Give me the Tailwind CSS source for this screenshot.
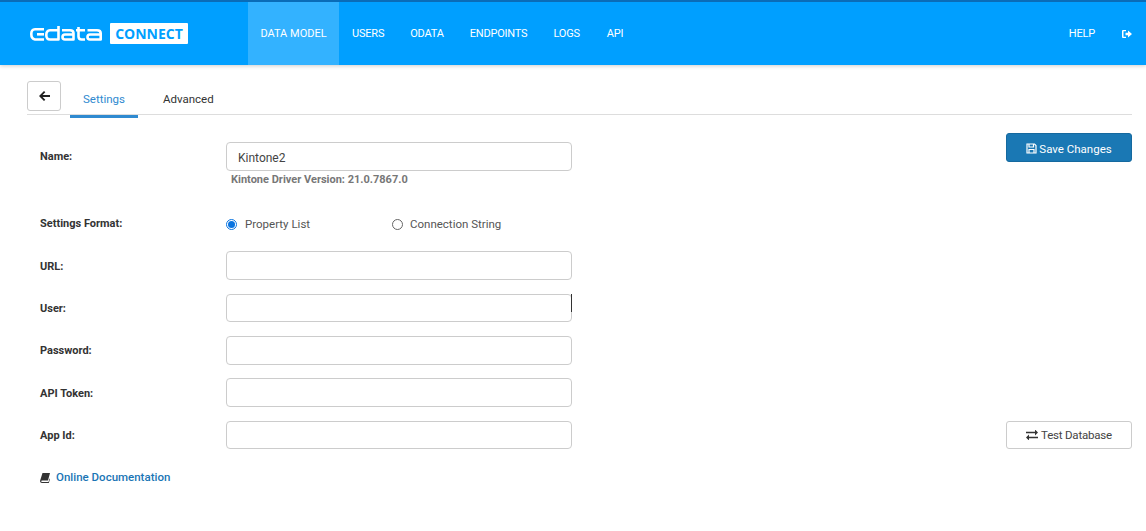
<!DOCTYPE html>
<html lang="en">
<head>
  <meta charset="UTF-8">
  <title>Kintone2 - CData Connect</title>
  <script src="https://cdn.jsdelivr.net/npm/@tailwindcss/browser@4"></script>
</head>
<body class="bg-white font-['Roboto',sans-serif] text-[11.5px] text-[#333]">
  <!-- top bar -->
  <nav class="h-[65px] bg-[#009fff] border-t-2 border-[#0a6cb8] flex items-stretch shadow-[0_1px_4px_rgba(0,0,0,0.2)] text-white text-[11px] tracking-[-0.2px]">
    <div class="w-[248px] pl-[30px] flex items-center gap-2">
      <svg width="72" height="15" viewBox="0 0 72 15" fill="none" stroke="white" stroke-width="2.600" stroke-linejoin="round">
        <path d="M14 3.300H5Q1.300 3.300 1.300 8T5 13.500H14"/>
        <path d="M14 8.300H7"/>
        <path d="M28.500 0V13.500H20Q16.300 13.500 16.300 9T20 4.300H28"/>
        <path d="M32 4.300H40Q43.500 4.300 43.500 7.300V13.500H35Q32.500 13.500 32.500 11T35 8.500H43"/>
        <path d="M48.500 1V10.500Q48.500 13.500 51.500 13.500H55M46 4.300H55"/>
        <path d="M57.500 4.300H67Q70.700 4.300 70.700 7.300V13.500H60Q57.500 13.500 57.500 11T60 8.500H70"/>
      </svg>
      <span class="bg-white text-[#009fff] font-['Open_Sans',sans-serif] font-bold text-[14px] tracking-normal leading-[21px] w-[78px] text-center rounded-[1px]">CONNECT</span>
    </div>
    <a class="w-[91px] pt-[2px] flex items-center justify-center bg-[#33b2ff] tracking-normal">DATA MODEL</a>
    <a class="ml-[13px] pt-[2px] flex items-center">USERS</a>
    <a class="ml-[26px] pt-[2px] flex items-center">ODATA</a>
    <a class="ml-[26px] pt-[2px] flex items-center">ENDPOINTS</a>
    <a class="ml-[26px] pt-[2px] flex items-center">LOGS</a>
    <a class="ml-[27px] pt-[2px] flex items-center">API</a>
    <a class="ml-auto pt-[2px] flex items-center">HELP</a>
    <a class="ml-[27px] mr-[14px] flex items-center">
      <svg width="10" height="10" viewBox="0 0 10 10" fill="white"><path d="M0 2Q0 1 1 1H4V2.300H1.500V7.700H4V9H1Q0 9 0 8ZM3.500 3.700H6V1.500L10 5L6 8.500V6.300H3.500Z"/></svg>
    </a>
  </nav>

  <main class="ml-[27px] mr-[14px]">
    <!-- tabs -->
    <div class="h-[50px] flex items-end border-b border-[#ddd]">
      <button class="w-[34px] h-[30px] mb-[3px] border border-[#ccc] rounded-[3px] flex items-center justify-center">
        <svg width="11" height="10" viewBox="0 0 11 10" fill="#222"><path d="M5 0L6.300 1.300L3.600 4H11V6H3.600L6.300 8.700L5 10L0 5Z"/></svg>
      </button>
      <div class="ml-[9px] w-[68px] h-[38px] -mb-[4px] pt-[5px] flex items-center justify-center text-[#2f8ad0] border-b-[3px] border-[#2f8ad0]">Settings</div>
      <div class="ml-[25px] h-[38px] -mb-[4px] pt-[5px] pb-[3px] flex items-center">Advanced</div>
    </div>

    <div class="flex justify-between mt-[18px]">
      <!-- form -->
      <div class="w-[532px] ml-[13px] pt-[9px]">
        <div class="flex">
          <label class="w-[186px] font-bold text-[11px] leading-[30px]">Name:</label>
          <div class="flex-1">
            <input value="Kintone2" class="w-full h-[29px] border border-[#ccc] rounded-[4px] px-[11px] pt-[3px] text-[12px] text-[#444]">
            <p class="pl-[5px] mt-[1px] font-bold text-[11px] leading-[16px] text-[#777]">Kintone Driver Version: 21.0.7867.0</p>
          </div>
        </div>
        <div class="flex items-center mt-[26px] h-[20px]">
          <label class="w-[186px] font-bold text-[11px]">Settings Format:</label>
          <span class="w-[11px] h-[11px] rounded-full border border-[#0a74e0] flex items-center justify-center"><span class="w-[7px] h-[7px] rounded-full bg-[#0a74e0]"></span></span>
          <span class="ml-[8px] pt-[2px] w-[147px] text-[#555]">Property List</span>
          <span class="w-[11px] h-[11px] rounded-full border border-[#666]"></span>
          <span class="ml-[7px] pt-[2px] text-[#555]">Connection String</span>
        </div>
        <div class="flex flex-col gap-[13px] mt-[17px]">
          <div class="flex items-center mb-[1px]"><label class="w-[186px] pt-[4px] font-bold text-[11px]">URL:</label><input class="flex-1 h-[29px] border border-[#ccc] rounded-[4px]"></div>
          <div class="flex items-center relative mb-[1px]"><label class="w-[186px] pt-[2px] font-bold text-[11px]">User:</label><input class="flex-1 h-[28px] border border-[#ccc] rounded-[4px]"><span class="absolute right-0 top-0 w-px h-[18px] bg-[#333]"></span></div>
          <div class="flex items-center"><label class="w-[186px] pt-[2px] font-bold text-[11px]">Password:</label><input class="flex-1 h-[29px] border border-[#ccc] rounded-[4px]"></div>
          <div class="flex items-center"><label class="w-[186px] pt-[4px] font-bold text-[11px]">API Token:</label><input class="flex-1 h-[29px] border border-[#ccc] rounded-[4px]"></div>
          <div class="flex items-center mt-[1px]"><label class="w-[186px] pt-[2px] font-bold text-[11px]">App Id:</label><input class="flex-1 h-[28px] border border-[#ccc] rounded-[4px]"></div>
        </div>
        <a class="flex items-center gap-[6px] mt-[20px] font-medium text-[#1a75b5]">
          <svg width="10" height="10" viewBox="0 0 10 10" fill="#333"><path d="M2.500 0H10L8 7.500H2Q1.200 7.500 1.200 8.200T2 9H8.500L9.500 5.500L10 6L8.800 10H2Q0 10 0 8Z"/></svg>
          Online Documentation
        </a>
      </div>
      <!-- actions -->
      <div class="w-[126px] h-[316px] flex flex-col justify-between">
        <button class="h-[29px] pt-[2px] bg-[#1a78b4] border border-[#15699f] rounded-[3px] text-white flex items-center justify-center gap-[2px]">
          <svg width="11" height="11" viewBox="0 0 11 11" fill="none" stroke="white" stroke-width="1.200"><path d="M1 1H8.500L10 2.500V10H1Z"/><path d="M3 1V4H7.500V1M3 10V6.500H8V10"/></svg>
          <span class="pt-[2px]">Save Changes</span>
        </button>
        <button class="h-[28px] tracking-[-0.2px] border border-[#ccc] rounded-[3px] flex items-center justify-center gap-[3px] text-[#444]">
          <svg width="12" height="10" viewBox="0 0 12 10" fill="#333"><path d="M0 2.200H9V0L12 3L9 6V3.800H0Z" transform="translate(0 -0.500)"/><path d="M12 7.800H3V10L0 7L3 4V6.200H12Z" transform="translate(0 0.500)"/></svg>
          <span class="pt-[2px]">Test Database</span>
        </button>
      </div>
    </div>
  </main>
</body>
</html>
